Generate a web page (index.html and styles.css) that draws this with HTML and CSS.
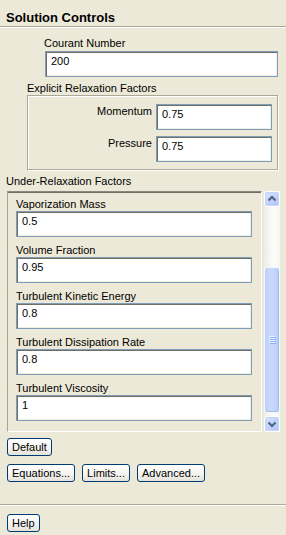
FILE: index.html
```html
<!DOCTYPE html>
<html>
<head>
<meta charset="utf-8">
<link rel="stylesheet" href="styles.css">
</head>
<body>
<div class="header"><h1 class="title">Solution Controls</h1></div>

<div class="courant">
  <div class="lbl">Courant Number</div>
  <div class="field courant-field">200</div>
</div>

<div class="lbl explicit-lbl">Explicit Relaxation Factors</div>
<div class="group">
  <div class="row"><span class="lbl">Momentum</span><div class="field small">0.75</div></div>
  <div class="row"><span class="lbl">Pressure</span><div class="field small">0.75</div></div>
</div>

<div class="lbl under-lbl">Under-Relaxation Factors</div>
<div class="scroller">
  <div class="panel">
    <div class="item"><div class="lbl">Vaporization Mass</div><div class="field">0.5</div></div>
    <div class="item"><div class="lbl">Volume Fraction</div><div class="field">0.95</div></div>
    <div class="item"><div class="lbl">Turbulent Kinetic Energy</div><div class="field">0.8</div></div>
    <div class="item"><div class="lbl">Turbulent Dissipation Rate</div><div class="field">0.8</div></div>
    <div class="item"><div class="lbl">Turbulent Viscosity</div><div class="field">1</div></div>
  </div>
  <div class="scrollbar">
    <div class="sb-btn">
      <svg width="14" height="14" viewBox="0 0 14 14"><path d="M3.5 8.5 L7 5 L10.5 8.5" fill="none" stroke="#4D6185" stroke-width="2"/></svg>
    </div>
    <div class="track">
      <div class="thumb">
        <svg width="7" height="8" viewBox="0 0 7 8">
          <rect x="0" y="0" width="6" height="1" fill="#EEF4FE"/><rect x="1" y="1" width="6" height="1" fill="#8CB0F8"/>
          <rect x="0" y="2" width="6" height="1" fill="#EEF4FE"/><rect x="1" y="3" width="6" height="1" fill="#8CB0F8"/>
          <rect x="0" y="4" width="6" height="1" fill="#EEF4FE"/><rect x="1" y="5" width="6" height="1" fill="#8CB0F8"/>
          <rect x="0" y="6" width="6" height="1" fill="#EEF4FE"/><rect x="1" y="7" width="6" height="1" fill="#8CB0F8"/>
        </svg>
      </div>
    </div>
    <div class="sb-btn">
      <svg width="14" height="14" viewBox="0 0 14 14"><path d="M3.5 5.5 L7 9 L10.5 5.5" fill="none" stroke="#4D6185" stroke-width="2"/></svg>
    </div>
  </div>
</div>

<div class="btnrow default-row"><button class="btn">Default</button></div>
<div class="btnrow second-row">
  <button class="btn">Equations...</button>
  <button class="btn">Limits...</button>
  <button class="btn">Advanced...</button>
</div>
<div class="sep"></div>
<div class="btnrow help-row"><button class="btn">Help</button></div>
</body>
</html>
```

FILE: styles.css
```css
html, body {
  margin: 0;
  padding: 0;
}
body {
  width: 286px;
  height: 535px;
  overflow: hidden;
  background: #ECE9D8;
  font-family: "Liberation Sans", Arial, sans-serif;
  font-size: 11px;
  line-height: 14px;
  color: #000;
}

.header {
  height: 26px;
  border-bottom: 1px solid #ACA899;
  box-shadow: 0 1px 0 #fff;
}
.title {
  margin: 0;
  padding: 10px 0 0 6px;
  font-size: 13px;
  line-height: 16px;
  font-weight: bold;
}

.lbl {
  white-space: nowrap;
}

.field {
  height: 26px;
  box-sizing: border-box;
  border: 1px solid #7F9DB9;
  box-shadow: inset 1px 1px 0 #716F64, inset -1px -1px 0 #F1EFE2;
  background: #fff;
  padding: 2px 0 0 5px;
  line-height: 14px;
}

.courant {
  margin: 9px 0 0 44px;
}
.courant-field {
  margin: 1px 0 0 1px;
  width: 233px;
}

.explicit-lbl {
  margin: 5px 0 0 27px;
  line-height: 13px;
}
.group {
  margin: 0 8px 0 27px;
  height: 75px;
  box-sizing: border-box;
  border: 1px solid #ACA899;
  box-shadow: inset 1px 1px 0 #fff, 1px 1px 0 #fff;
  padding: 8px 5px 0 0;
  display: flex;
  flex-direction: column;
  gap: 6px;
}
.row {
  display: flex;
  justify-content: flex-end;
  align-items: flex-start;
  gap: 4px;
}
.field.small {
  width: 116px;
}

.under-lbl {
  margin: 4px 0 0 6px;
}

.scroller {
  display: flex;
  margin: 3px 0 0 7px;
  height: 241px;
}
.panel {
  width: 255px;
  box-sizing: border-box;
  border-style: solid;
  border-width: 1px;
  border-color: #8A887C #fff #fff #A7A596;
  box-shadow: inset 0 1px 0 #716F64;
  overflow: hidden;
  padding: 5px 9px 0 8px;
  display: flex;
  flex-direction: column;
  gap: 6px;
}
.item .field {
  margin-top: 0;
}

.scrollbar {
  margin-left: 2px;
  width: 16px;
  display: flex;
  flex-direction: column;
  background: linear-gradient(to right, #EEEDE5, #FCFCF9 60%, #F6F5F0);
}
.sb-btn {
  height: 16px;
  box-sizing: border-box;
  border: 1px solid #FFFFFF;
  border-radius: 3px;
  background: linear-gradient(135deg, #D9E4FE, #BACDF7 70%, #AFC4F3);
  box-shadow: inset 0 0 0 1px #C4D5FA;
  display: flex;
  align-items: center;
  justify-content: center;
}
.track {
  flex: 1;
  padding-top: 60px;
}
.thumb {
  height: 146px;
  box-sizing: border-box;
  border: 1px solid #F4F8FF;
  border-radius: 3px;
  background: linear-gradient(to right, #BDD0FA, #CAD9FD 40%, #C0D2FB 80%, #B4C8F5);
  box-shadow: inset -1px -1px 0 #A5BDEF;
  display: flex;
  align-items: center;
  justify-content: center;
}

.btnrow {
  display: flex;
  gap: 7px;
  margin-left: 7px;
}
.default-row {
  margin-top: 6px;
}
.second-row {
  margin-top: 8px;
}
.help-row {
  margin-top: 9px;
}
.btn {
  font-family: inherit;
  font-size: 11px;
  line-height: 16px;
  height: 18px;
  box-sizing: border-box;
  margin: 0;
  padding: 0 4px;
  color: #000;
  border: 1px solid #003C74;
  border-radius: 3px;
  background: linear-gradient(#FFFFFF, #F5F4F0 55%, #E4E2D9);
}

.sep {
  margin-top: 22px;
  height: 1px;
  background: #ACA899;
  box-shadow: 0 1px 0 #fff;
}
```
